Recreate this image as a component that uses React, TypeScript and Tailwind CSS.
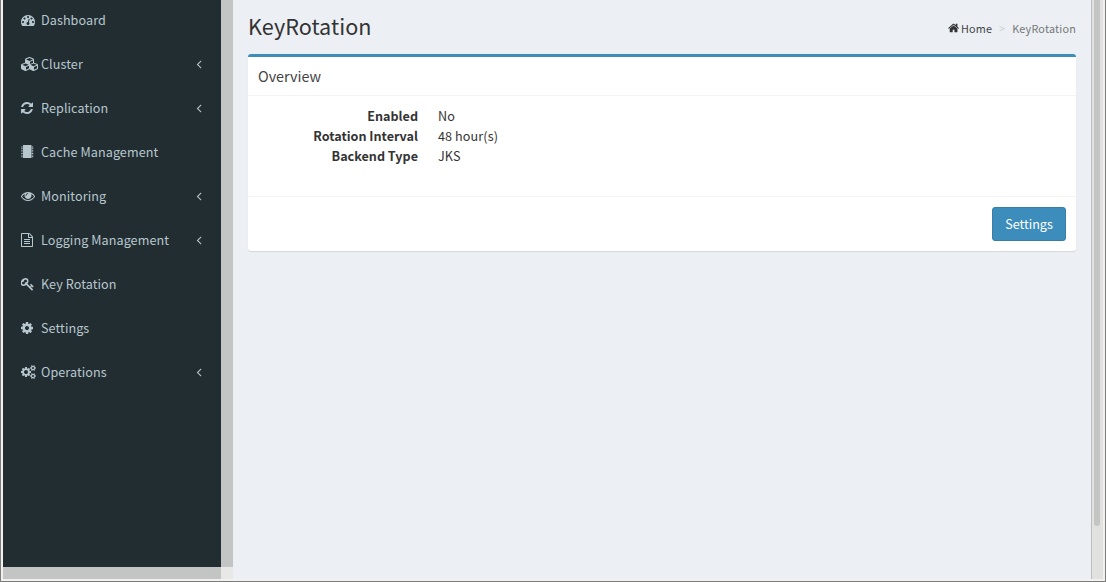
import React from "react";

type IconProps = { d: string; w?: number; size?: number; crop?: number };

function Icon({ d, w = 1792, size = 14, crop = 0 }: IconProps) {
  return (
    <svg
      width={(w / 1792) * size}
      height={size}
      viewBox={`${crop} 0 ${w} 1792`}
      fill="currentColor"
      className="block shrink-0"
    >
      <path d={d} />
    </svg>
  );
}

const paths = {
  dashboard:
    "M384 1152q0-53-37.5-90.5t-90.5-37.5-90.5 37.5-37.5 90.5 37.5 90.5 90.5 37.5 90.5-37.5 37.5-90.5zm192-448q0-53-37.5-90.5t-90.5-37.5-90.5 37.5-37.5 90.5 37.5 90.5 90.5 37.5 90.5-37.5 37.5-90.5zm428 481l101-382q6-26-7.5-48.5t-38.5-29.5-48 6.5-30 39.5l-101 382q-60 5-107 43.5t-63 98.5q-20 77 20 146t117 89 146-20 89-117q16-60-6-117t-72-91zm660-33q0-53-37.5-90.5t-90.5-37.5-90.5 37.5-37.5 90.5 37.5 90.5 90.5 37.5 90.5-37.5 37.5-90.5zm-640-640q0-53-37.5-90.5t-90.5-37.5-90.5 37.5-37.5 90.5 37.5 90.5 90.5 37.5 90.5-37.5 37.5-90.5zm448 192q0-53-37.5-90.5t-90.5-37.5-90.5 37.5-37.5 90.5 37.5 90.5 90.5 37.5 90.5-37.5 37.5-90.5zm320 448q0 261-141 483-19 29-54 29h-1402q-35 0-54-29-141-221-141-483 0-182 71-348t191-286 286-191 348-71 348 71 286 191 191 286 71 348z",
  cubes:
    "M640 1632l384-192v-314l-384 164v342zm-64-454l404-173-404-173-404 173zm1088 454l384-192v-314l-384 164v342zm-64-454l404-173-404-173-404 173zm-448-293l384-165v-266l-384 164v267zm-64-379l441-189-441-189-441 189zm1088 518v416q0 36-19 67t-52 47l-448 224q-25 14-57 14t-57-14l-448-224q-4-2-7-4-2 2-7 4l-448 224q-25 14-57 14t-57-14l-448-224q-33-16-52-47t-19-67v-416q0-38 21.5-70t56.5-48l434-186v-400q0-38 21.5-70t56.5-48l448-192q23-10 50-10t50 10l448 192q35 16 56.5 48t21.5 70v400l434 186q36 16 57 48t21 70z",
  refresh:
    "M1639 1056q0 5-1 7-64 268-268 434.5t-478 166.5q-146 0-282.5-55t-243.5-157l-129 129q-19 19-45 19t-45-19-19-45v-448q0-26 19-45t45-19h448q26 0 45 19t19 45-19 45l-137 137q71 66 161 102t187 36q134 0 250-65t186-179q11-17 53-117 8-23 30-23h192q13 0 22.5 9.5t9.5 22.5zm25-800v448q0 26-19 45t-45 19h-448q-26 0-45-19t-19-45 19-45l138-138q-148-137-349-137-134 0-250 65t-186 179q-11 17-53 117-8 23-30 23h-199q-13 0-22.5-9.5t-9.5-22.5v-7q65-268 270-434.5t480-166.5q146 0 284 55.5t245 156.5l130-129q19-19 45-19t45 19 19 45z",
  chip:
    "M320 0h960q64 0 64 64v1536q0 64-64 64h-960q-64 0-64-64v-1536q0-64 64-64zM32 192h176v112h-176zM32 400h176v112h-176zM32 608h176v112h-176zM32 816h176v112h-176zM32 1024h176v112h-176zM32 1232h176v112h-176zM32 1440h176v112h-176zM1392 192h176v112h-176zM1392 400h176v112h-176zM1392 608h176v112h-176zM1392 816h176v112h-176zM1392 1024h176v112h-176zM1392 1232h176v112h-176zM1392 1440h176v112h-176z",
  eye:
    "M1664 960q-152-236-381-353 61 104 61 225 0 185-131.5 316.5t-316.5 131.5-316.5-131.5-131.5-316.5q0-121 61-225-229 117-381 353 133 205 333.5 326.5t434.5 121.5 434.5-121.5 333.5-326.5zm-720-384q0-20-14-34t-34-14q-125 0-214.5 89.5t-89.5 214.5q0 20 14 34t34 14 34-14 14-34q0-86 61-147t147-61q20 0 34-14t14-34zm848 384q0 34-20 69-140 230-376.5 368.5t-499.5 138.5-499.5-139-376.5-368q-20-35-20-69t20-69q140-229 376.5-368t499.5-139 499.5 139 376.5 368q20 35 20 69z",
  file:
    "M1596 380q28 28 48 76t20 88v1152q0 40-28 68t-68 28h-1344q-40 0-68-28t-28-68v-1600q0-40 28-68t68-28h896q40 0 88 20t76 48zm-444-244v376h376q-10-29-22-41l-313-313q-12-12-41-22zm384 1528v-1024h-416q-40 0-68-28t-28-68v-416h-768v1536h1280zm-1024-864q0-14 9-23t23-9h704q14 0 23 9t9 23v64q0 14-9 23t-23 9h-704q-14 0-23-9t-9-23v-64zm736 224q14 0 23 9t9 23v64q0 14-9 23t-23 9h-704q-14 0-23-9t-9-23v-64q0-14 9-23t23-9h704zm0 256q14 0 23 9t9 23v64q0 14-9 23t-23 9h-704q-14 0-23-9t-9-23v-64q0-14 9-23t23-9h704z",
  key:
    "M832 512q0-80-56-136t-136-56-136 56-56 136q0 42 19 83-41-19-83-19-80 0-136 56t-56 136 56 136 136 56 136-56 56-136q0-42-19-83 41 19 83 19 80 0 136-56t56-136zm851 704q0 17-49 66t-66 49q-9 0-28.5-16t-36.5-33-38.5-40-24.5-26l-96 96 220 220q28 28 28 68 0 42-39 81t-81 39q-40 0-68-28l-671-671q-176 131-365 131-163 0-265.5-102.5t-102.5-265.5q0-160 95-313t248-248 313-95q163 0 265.5 102.5t102.5 265.5q0 189-131 365l355 355 96-96q-3-3-26-24.5t-40-38.5-33-36.5-16-28.5q0-17 49-66t66-49q13 0 23 10 6 6 46 44.5t82 79.5 86.5 86 73 78 28.5 41z",
  cog:
    "M1152 896q0-106-75-181t-181-75-181 75-75 181 75 181 181 75 181-75 75-181zm512-109v222q0 12-8 23t-20 13l-185 28q-19 54-39 91 35 50 107 138 10 12 10 25t-9 23q-27 37-99 108t-94 71q-12 0-26-9l-138-108q-44 23-91 38-16 136-29 186-7 28-36 28h-222q-14 0-24.5-8.5t-11.5-21.5l-28-184q-49-16-90-37l-141 107q-10 9-25 9-14 0-25-11-126-114-165-168-7-10-7-23 0-12 8-23 15-21 51-66.5t54-70.5q-27-50-41-99l-183-27q-13-2-21-12.5t-8-23.5v-222q0-12 8-23t19-13l186-28q14-46 39-92-40-57-107-138-10-12-10-24 0-10 9-23 26-36 98.5-107.5t94.5-71.5q13 0 26 10l138 107q44-23 91-38 16-136 29-186 7-28 36-28h222q14 0 24.5 8.5t11.5 21.5l28 184q49 16 90 37l142-107q9-9 24-9 13 0 25 10 129 119 165 170 7 8 7 22 0 12-8 23-15 21-51 66.5t-54 70.5q26 50 41 98l183 28q13 2 21 12.5t8 23.5z",
  cogs:
    "M896 896q0-106-75-181t-181-75-181 75-75 181 75 181 181 75 181-75 75-181zm768 512q0-52-38-90t-90-38-90 38-38 90q0 53 37.5 90.5t90.5 37.5 90.5-37.5 37.5-90.5zm0-1024q0-52-38-90t-90-38-90 38-38 90q0 53 37.5 90.5t90.5 37.5 90.5-37.5 37.5-90.5zm-384 421v185q0 10-7 19.5t-16 10.5l-155 24q-11 35-32 76 34 48 90 115 7 11 7 20 0 12-7 19-23 30-82.5 89.5t-78.5 59.5q-11 0-21-7l-115-90q-37 19-77 31-11 108-23 155-7 24-30 24h-186q-11 0-20-7.5t-10-17.5l-23-153q-34-10-75-31l-118 89q-7 7-20 7-11 0-21-8-144-133-144-160 0-9 7-19 10-14 41-53t47-61q-23-44-35-82l-152-24q-10-1-17-9.5t-7-19.5v-185q0-10 7-19.5t16-10.5l155-24q11-35 32-76-34-48-90-115-7-11-7-20 0-12 7-20 22-30 82-89t79-59q11 0 21 7l115 90q34-18 77-32 11-108 23-154 7-24 30-24h186q11 0 20 7.5t10 17.5l23 153q34 10 75 31l118-89q8-7 20-7 11 0 21 8 144 133 144 160 0 8-7 19-12 16-42 54t-45 60q23 48 34 82l152 23q10 2 17 10.5t7 19.5zm640 533v140q0 16-149 31-12 27-30 52 51 113 51 138 0 4-4 7-122 71-124 71-8 0-46-47t-52-68q-20 2-30 2t-30-2q-14 21-52 68t-46 47q-2 0-124-71-4-3-4-7 0-25 51-138-18-25-30-52-149-15-149-31v-140q0-16 149-31 13-29 30-52-51-113-51-138 0-4 4-7 4-2 35-20t59-34 30-16q8 0 46 46.5t52 67.5q20-2 30-2t30 2q51-71 92-112l6-2q4 0 124 70 4 3 4 7 0 25-51 138 17 23 30 52 149 15 149 31zm0-1024v140q0 16-149 31-12 27-30 52 51 113 51 138 0 4-4 7-122 71-124 71-8 0-46-47t-52-68q-20 2-30 2t-30-2q-14 21-52 68t-46 47q-2 0-124-71-4-3-4-7 0-25 51-138-18-25-30-52-149-15-149-31v-140q0-16 149-31 13-29 30-52-51-113-51-138 0-4 4-7 4-2 35-20t59-34 30-16q8 0 46 46.5t52 67.5q20-2 30-2t30 2q51-71 92-112l6-2q4 0 124 70 4 3 4 7 0 25-51 138 17 23 30 52 149 15 149 31z",
  home:
    "M1472 992v480q0 26-19 45t-45 19h-384v-384h-256v384h-384q-26 0-45-19t-19-45v-480q0-1 .5-3t.5-3l575-474 575 474q1 2 1 6zm223-69l-62 74q-8 9-21 11h-3q-13 0-21-7l-692-577-692 577q-12 8-24 7-13-2-21-11l-62-74q-8-10-7-23.5t11-21.5l719-599q32-26 76-26t76 26l244 204v-195q0-14 9-23t23-9h192q14 0 23 9t9 23v408l219 182q10 8 11 21.5t-7 23.5z",
  angleLeft:
    "M1203 544q0 13-10 23l-393 393 393 393q10 10 10 23t-10 23l-50 50q-10 10-23 10t-23-10l-466-466q-10-10-10-23t10-23l466-466q10-10 23-10t23 10l50 50q10 10 10 23z",
};

type Item = { label: string; d: string; w?: number; crop?: number; sub?: boolean };

const items: Item[] = [
  { label: "Dashboard", d: paths.dashboard },
  { label: "Cluster", d: paths.cubes, w: 2304, sub: true },
  { label: "Replication", d: paths.refresh, w: 1536, crop: 128, sub: true },
  { label: "Cache Management", d: paths.chip, w: 1600 },
  { label: "Monitoring", d: paths.eye, sub: true },
  { label: "Logging Management", d: paths.file, w: 1536, crop: 128, sub: true },
  { label: "Key Rotation", d: paths.key, w: 1664, crop: 64 },
  { label: "Settings", d: paths.cog, w: 1536, crop: 128 },
  { label: "Operations", d: paths.cogs, w: 1920, sub: true },
];

function Sidebar() {
  return (
    <div className="flex w-[230px] shrink-0 flex-col">
      <div className="flex h-[567px]">
        <nav className="-mt-0.5 w-[218px] bg-[#222d32] text-[#b8c7ce]">
          {items.map((it) => (
            <a key={it.label} className="flex h-11 items-center pr-[15.5px] pl-[18px]">
              <span className="w-5 shrink-0">
                <Icon d={it.d} w={it.w} crop={it.crop} />
              </span>
              <span className="grow text-[12.6px] tracking-[0.08px] whitespace-nowrap">{it.label}</span>
              {it.sub && <Icon d={paths.angleLeft} />}
            </a>
          ))}
        </nav>
        <div className="w-3 bg-[#c3c5c4]" />
      </div>
      <div className="flex h-3">
        <div className="w-[218px] bg-[#c3c5c4]" />
        <div className="w-3 bg-[#e8e8e7]" />
      </div>
    </div>
  );
}

const details = [
  ["Enabled", "No"],
  ["Rotation Interval", "48 hour(s)"],
  ["Backend Type", "JKS"],
];

export default function App() {
  return (
    <div className="flex h-[582px] w-[1106px] overflow-hidden border-r border-b border-l border-[#7c7c7a] bg-[#f2f1f0] pr-0.5 pb-0.5 pl-0.5 font-['Noto_Sans_CJK_SC','Noto_Sans',sans-serif] text-[12.6px] text-[#333]">
      <Sidebar />
      <main className="h-[579px] w-[858px] shrink-0 bg-[#ecf0f5] px-[15px]">
        <header className="flex h-[54px] justify-between">
          <h1 className="text-[21.6px] leading-[51px] tracking-[0.04px]">KeyRotation</h1>
          <div className="mt-[18px] flex h-5 items-center text-[10.8px] tracking-[0.2px]">
            <Icon d={paths.home} w={1664} crop={64} size={12} />
            <span className="ml-[1.5px] text-[#444]">Home</span>
            <span className="mx-[7px] text-[#ccc]">&gt;</span>
            <span className="text-[#777]">KeyRotation</span>
          </div>
        </header>
        <section className="rounded-[3px] border-t-[3px] border-[#3c8dbc] bg-white shadow-[0_1px_1px_rgba(0,0,0,0.1)]">
          <h2 className="h-[39px] border-b border-[#f4f4f4] px-2.5 text-[14.4px] leading-[37px] text-[#444]">
            Overview
          </h2>
          <dl className="h-[101px] border-b border-[#f4f4f4] p-2.5 leading-5">
            {details.map(([term, value]) => (
              <div key={term} className="flex gap-5">
                <dt className="w-40 text-right font-bold">{term}</dt>
                <dd className="tracking-[0.1px]">{value}</dd>
              </div>
            ))}
          </dl>
          <footer className="flex h-[54px] items-start justify-end p-2.5">
            <button className="h-[34px] w-[74px] rounded-[3px] border border-[#367fa9] bg-[#3c8dbc] text-white">
              Settings
            </button>
          </footer>
        </section>
      </main>
      <div className="h-[579px] w-3 shrink-0 border-l border-[#bdbdbb] bg-[#e1e1df] pl-0.5">
        <div className="h-[526px] w-1.5 rounded-b-[3px] bg-[#c3c5c4]" />
      </div>
    </div>
  );
}
